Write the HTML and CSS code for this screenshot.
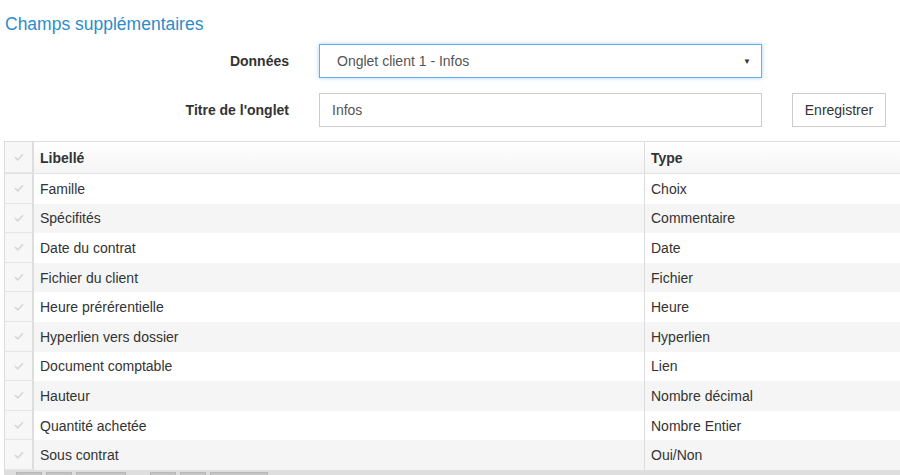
FILE: index.html
```html
<!DOCTYPE html>
<html lang="fr">
<head>
<meta charset="utf-8">
<link rel="stylesheet" href="styles.css">
</head>
<body>
<h1 class="title">Champs supplémentaires</h1>
<form class="form">
  <div class="row">
    <label class="label">Données</label>
    <div class="select">
      <span>Onglet client 1 - Infos</span>
      <span class="caret">&#9660;</span>
    </div>
  </div>
  <div class="row">
    <label class="label">Titre de l'onglet</label>
    <div class="input">Infos</div>
    <button type="button" class="btn">Enregistrer</button>
  </div>
</form>
<div class="grid">
  <div class="tr head">
    <div class="chk"><svg viewBox="0 0 10 8"><path d="M1 4.2 L3.8 6.8 L9 1.2" /></svg></div>
    <div class="c1">Libellé</div>
    <div class="c2">Type</div>
  </div>
  <div class="tr"><div class="chk"><svg viewBox="0 0 10 8"><path d="M1 4.2 L3.8 6.8 L9 1.2" /></svg></div><div class="c1">Famille</div><div class="c2">Choix</div></div>
  <div class="tr alt"><div class="chk"><svg viewBox="0 0 10 8"><path d="M1 4.2 L3.8 6.8 L9 1.2" /></svg></div><div class="c1">Spécifités</div><div class="c2">Commentaire</div></div>
  <div class="tr"><div class="chk"><svg viewBox="0 0 10 8"><path d="M1 4.2 L3.8 6.8 L9 1.2" /></svg></div><div class="c1">Date du contrat</div><div class="c2">Date</div></div>
  <div class="tr alt"><div class="chk"><svg viewBox="0 0 10 8"><path d="M1 4.2 L3.8 6.8 L9 1.2" /></svg></div><div class="c1">Fichier du client</div><div class="c2">Fichier</div></div>
  <div class="tr"><div class="chk"><svg viewBox="0 0 10 8"><path d="M1 4.2 L3.8 6.8 L9 1.2" /></svg></div><div class="c1">Heure prérérentielle</div><div class="c2">Heure</div></div>
  <div class="tr alt"><div class="chk"><svg viewBox="0 0 10 8"><path d="M1 4.2 L3.8 6.8 L9 1.2" /></svg></div><div class="c1">Hyperlien vers dossier</div><div class="c2">Hyperlien</div></div>
  <div class="tr"><div class="chk"><svg viewBox="0 0 10 8"><path d="M1 4.2 L3.8 6.8 L9 1.2" /></svg></div><div class="c1">Document comptable</div><div class="c2">Lien</div></div>
  <div class="tr alt"><div class="chk"><svg viewBox="0 0 10 8"><path d="M1 4.2 L3.8 6.8 L9 1.2" /></svg></div><div class="c1">Hauteur</div><div class="c2">Nombre décimal</div></div>
  <div class="tr"><div class="chk"><svg viewBox="0 0 10 8"><path d="M1 4.2 L3.8 6.8 L9 1.2" /></svg></div><div class="c1">Quantité achetée</div><div class="c2">Nombre Entier</div></div>
  <div class="tr alt"><div class="chk"><svg viewBox="0 0 10 8"><path d="M1 4.2 L3.8 6.8 L9 1.2" /></svg></div><div class="c1">Sous contrat</div><div class="c2">Oui/Non</div></div>
  <div class="pager">
    <span class="pb w1"></span><span class="pb w2"></span><span class="pb w3"></span>
    <span class="pb w4 gap"></span><span class="pb w5"></span><span class="pb w6"></span>
  </div>
</div>
</body>
</html>
```
FILE: styles.css
```css
html, body {
  margin: 0;
  padding: 0;
  background: #fff;
  overflow: hidden;
}
body {
  font-family: "Liberation Sans", Arial, sans-serif;
  font-size: 14px;
  color: #333;
  width: 900px;
  height: 475px;
}
.title {
  margin: 0;
  padding: 14px 0 0 5px;
  font-size: 17.5px;
  font-weight: normal;
  color: #2b8ccb;
  line-height: 20px;
}
.form {
  padding-top: 10px;
}
.row {
  display: flex;
  align-items: center;
  height: 34px;
  margin-bottom: 15px;
}
.label {
  width: 289px;
  text-align: right;
  font-weight: bold;
  color: #333;
  margin-right: 30px;
}
.select, .input {
  box-sizing: border-box;
  width: 443px;
  height: 34px;
  border: 1px solid #ccc;
  display: flex;
  align-items: center;
  color: #555;
}
.select {
  border-color: #66afe9;
  box-shadow: 0 0 4px rgba(102, 175, 233, 0.6);
  padding: 0 10px 0 17px;
  justify-content: space-between;
}
.caret {
  font-size: 8px;
  color: #333;
}
.input {
  padding: 0 12px;
}
.btn {
  box-sizing: border-box;
  margin-left: 30px;
  width: 94px;
  height: 34px;
  border: 1px solid #ccc;
  background: #fff;
  color: #333;
  font-family: inherit;
  font-size: 14px;
  padding: 0;
}
.grid {
  margin: -1px 0 0 4px;
  border-left: 1px solid #ddd;
  border-top: 1px solid #ddd;
}
.tr {
  display: flex;
  height: 29.6px;
  align-items: stretch;
  background: #fff;
}
.tr.alt {
  background: #f5f5f5;
}
.tr.head {
  height: 31px;
  font-weight: bold;
  background: linear-gradient(#fff, #f4f4f4);
  border-bottom: 1px solid #e2e2e2;
}
.chk {
  box-sizing: border-box;
  width: 29px;
  flex: none;
  display: flex;
  align-items: center;
  justify-content: center;
  border-right: 2px solid #ddd;
  border-bottom: 1px solid #e6e6e6;
  background: #f7f7f7;
}
.chk svg {
  width: 10px;
  height: 8px;
  fill: none;
  stroke: #d6d6d6;
  stroke-width: 1.6;
}
.c1, .c2 {
  display: flex;
  align-items: center;
}
.c1 {
  width: 611px;
  padding-left: 6px;
  box-sizing: border-box;
  border-right: 1px solid #ddd;
}
.c2 {
  padding-left: 6px;
  flex: 1;
}
.pager {
  height: 20px;
  background: #dedede;
  display: flex;
  align-items: flex-start;
  padding: 2px 0 0 12px;
  gap: 4px;
  margin-left: -1px;
}
.pb {
  display: block;
  height: 8px;
  background: #c4c4c4;
  border: 1px solid #b8b8b8;
}
.w1 { width: 24px; }
.w2 { width: 24px; }
.w3 { width: 48px; }
.w4 { width: 24px; }
.w4.gap { margin-left: 20px; }
.w5 { width: 24px; }
.w6 { width: 56px; }
```
